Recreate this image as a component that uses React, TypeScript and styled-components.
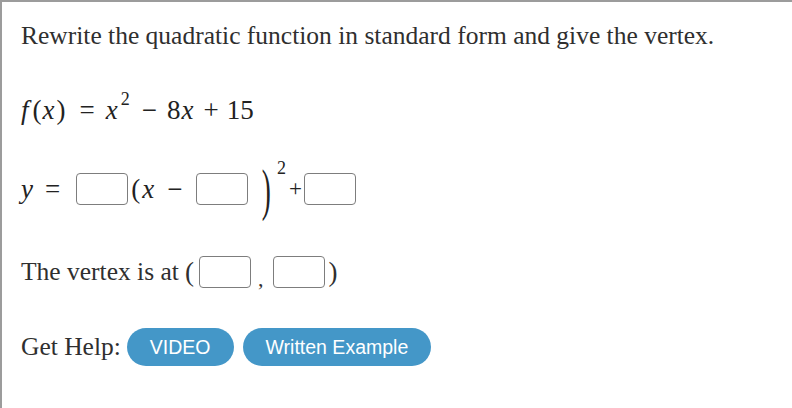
import React from 'react';
import styled, { createGlobalStyle } from 'styled-components';

const GlobalStyle = createGlobalStyle`
  html, body {
    margin: 0;
    padding: 0;
    background: #ffffff;
  }
  body {
    font-family: 'Liberation Serif', 'Times New Roman', serif;
    color: #2f2f2f;
  }
`;

const Frame = styled.div`
  box-sizing: border-box;
  width: 792px;
  height: 408px;
  border-top: 2px solid #9c9c9c;
  border-left: 2px solid #9c9c9c;
  padding: 0 0 0 19px;
  display: flex;
  flex-direction: column;
`;

const Row = styled.div<{ $top: number; $height?: number }>`
  display: flex;
  align-items: center;
  margin-top: ${(p) => p.$top}px;
  height: ${(p) => p.$height ?? 36}px;
  font-size: 25.5px;
  white-space: nowrap;
`;

const Math = styled.span`
  display: inline-flex;
  align-items: center;
  font-family: 'Liberation Serif', 'DejaVu Serif', serif;
  font-size: 27px;
  color: #222222;
`;

const Var = styled.i<{ $l?: number; $r?: number }>`
  font-style: italic;
  margin: 0 ${(p) => p.$r ?? 0}px 0 ${(p) => p.$l ?? 0}px;
`;

const Op = styled.span<{ $l?: number; $r?: number }>`
  margin: 0 ${(p) => p.$r ?? 9}px 0 ${(p) => p.$l ?? 9}px;
`;

const Sup = styled.span`
  font-size: 18px;
  position: relative;
  top: -11px;
  margin-left: 3px;
`;

const Blank = styled.input`
  box-sizing: border-box;
  width: 52px;
  height: 32px;
  border: 1px solid #7d7d7d;
  border-radius: 4px;
  background: #ffffff;
  margin: 0;
  padding: 0;
`;

const BigParen = styled.span`
  display: inline-block;
  font-size: 32px;
  transform: scale(0.85, 1.8);
  margin: 0 1px 0 13px;
  line-height: 1;
`;

const Power = styled.span`
  position: relative;
  top: -21px;
  font-size: 18px;
  margin-left: 4px;
`;

const Small = styled.span`
  font-size: 23px;
  margin: 0 2px 0 3px;
`;

const Paren = styled.span<{ $side: 'l' | 'r' }>`
  font-size: 27px;
  margin: ${(p) => (p.$side === 'l' ? '0 5px 0 6px' : '0 0 0 3px')};
`;

const Comma = styled.span`
  margin: 0 10px 0 7px;
  position: relative;
  top: 7px;
  font-size: 22px;
`;

const HelpButton = styled.button`
  height: 38px;
  padding: 0 23px;
  border: none;
  border-radius: 19px;
  background: #4497c8;
  color: #ffffff;
  font-family: 'Liberation Sans', Arial, sans-serif;
  font-size: 19.5px;
  cursor: pointer;
`;

const Buttons = styled.div`
  display: flex;
  gap: 9px;
  margin-left: 6px;
`;

export default function App() {
  return (
    <>
      <GlobalStyle />
      <Frame>
        <Row $top={16}>Rewrite the quadratic function in standard form and give the vertex.</Row>

        <Row $top={38}>
          <Math>
            <Var $r={4}>f</Var>(<Var $l={1} $r={2}>x</Var>)
            <Op $l={14} $r={11}>=</Op>
            <Var>x</Var>
            <Sup>2</Sup>
            <Op $l={12} $r={10}>−</Op>8<Var $l={1}>x</Var>
            <Op $l={10} $r={8}>+</Op>15
          </Math>
        </Row>

        <Row $top={43}>
          <Math>
            <Var $r={2}>y</Var>
            <Op $l={10} $r={16}>=</Op>
            <Blank />
            <span style={{ marginLeft: 3 }}>(</span>
            <Var $l={2}>x</Var>
            <Op $l={13} $r={14}>−</Op>
            <Blank />
            <BigParen>)</BigParen>
            <Power>2</Power>
            <Small>+</Small>
            <Blank />
          </Math>
        </Row>

        <Row $top={47}>
          The vertex is at
          <Paren $side="l">(</Paren>
          <Blank />
          <Comma>,</Comma>
          <Blank />
          <Paren $side="r">)</Paren>
        </Row>

        <Row $top={38} $height={38}>
          Get Help:
          <Buttons>
            <HelpButton>VIDEO</HelpButton>
            <HelpButton>Written Example</HelpButton>
          </Buttons>
        </Row>
      </Frame>
    </>
  );
}
